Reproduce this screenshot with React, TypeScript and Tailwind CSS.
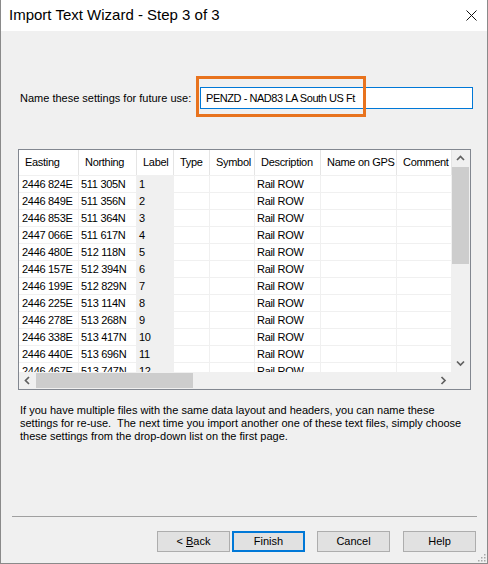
import React from "react";

const ui = { fontFamily: '"Liberation Sans", Arial, sans-serif' };

const columns = [
  { name: "Easting", w: "w-[60px]" },
  { name: "Northing", w: "w-[58px]" },
  { name: "Label", w: "w-[37px]" },
  { name: "Type", w: "w-[36px]" },
  { name: "Symbol", w: "w-[45px]" },
  { name: "Description", w: "w-[66px]" },
  { name: "Name on GPS", w: "w-[76px]" },
  { name: "Comment", w: "w-[55px]" },
];

const rows = [
  ["2446 824E", "511 305N"],
  ["2446 849E", "511 356N"],
  ["2446 853E", "511 364N"],
  ["2447 066E", "511 617N"],
  ["2446 480E", "512 118N"],
  ["2446 157E", "512 394N"],
  ["2446 199E", "512 829N"],
  ["2446 225E", "513 114N"],
  ["2446 278E", "513 268N"],
  ["2446 338E", "513 417N"],
  ["2446 440E", "513 696N"],
  ["2446 467E", "513 747N"],
];

function Chevron({ dir }: { dir: "up" | "down" | "left" | "right" }) {
  const paths = {
    up: "M1 5 L4.5 1.5 L8 5",
    down: "M1 1.5 L4.5 5 L8 1.5",
    left: "M5 1 L1.5 4.5 L5 8",
    right: "M1.5 1 L5 4.5 L1.5 8",
  };
  const box = dir === "up" || dir === "down" ? "0 0 9 6.5" : "0 0 6.5 9";
  const size = dir === "up" || dir === "down" ? { w: 9, h: 6.5 } : { w: 6.5, h: 9 };
  return (
    <svg width={size.w} height={size.h} viewBox={box}>
      <path d={paths[dir]} fill="none" stroke="#606060" strokeWidth="1.7" />
    </svg>
  );
}

function DataGrid() {
  return (
    <div className="ml-[17px] mt-[40px] flex h-[241px] w-[453px] flex-col border border-[#828790] bg-[#f0f0f0] tracking-[-0.3px]">
      <div className="flex h-[222px]">
        <div className="h-full w-[433px] overflow-hidden bg-white">
          <div className="flex h-[25px]">
            {columns.map((c) => (
              <div
                key={c.name}
                className={`${c.w} flex shrink-0 items-center border-r border-[#e5e5e5] pl-[6px] text-[11px] whitespace-nowrap text-black`}
              >
                {c.name}
              </div>
            ))}
          </div>
          {rows.map((r, i) => (
            <div key={i} className="flex h-[17px] border-t border-[#f0f0f0]">
              {columns.map((c, j) => {
                let text = "";
                if (j === 0) text = r[0];
                if (j === 1) text = r[1];
                if (j === 2) text = String(i + 1);
                if (j === 5) text = "Rail ROW";
                return (
                  <div
                    key={c.name}
                    className={`${c.w} flex shrink-0 items-center border-r border-[#f0f0f0] text-[11px] whitespace-nowrap text-black ${
                      j === 0 ? "pl-[3px]" : "pl-[2px]"
                    } ${j === 2 ? "bg-[#f0f0f0]" : ""}`}
                  >
                    {text}
                  </div>
                );
              })}
            </div>
          ))}
        </div>
        <div className="flex h-full w-[17px] flex-col">
          <div className="flex h-[17px] items-center justify-center">
            <Chevron dir="up" />
          </div>
          <div className="flex-1">
            <div className="h-[97px] bg-[#cdcdcd]" />
          </div>
          <div className="flex h-[17px] items-center justify-center">
            <Chevron dir="down" />
          </div>
        </div>
      </div>
      <div className="flex h-[17px]">
        <div className="flex w-[433px] items-center">
          <div className="flex w-[17px] items-center justify-center">
            <Chevron dir="left" />
          </div>
          <div className="h-[15px] w-[157px] bg-[#cdcdcd]" />
          <div className="flex-1" />
          <div className="flex w-[17px] items-center justify-center">
            <Chevron dir="right" />
          </div>
        </div>
        <div className="w-[17px]" />
      </div>
    </div>
  );
}

function Button({ label, focused }: { label: React.ReactNode; focused?: boolean }) {
  return (
    <div
      className={`flex h-[21px] w-[73px] items-center justify-center bg-[#e1e1e1] text-[11px] text-black ${
        focused ? "border-2 border-[#0078d7]" : "border border-[#adadad]"
      }`}
    >
      {label}
    </div>
  );
}

export default function App() {
  return (
    <div
      className="relative flex h-[564px] w-[488px] flex-col border-x border-b border-[#8a8a8a] bg-[#f0f0f0]"
      style={ui}
    >
      <div className="flex h-[31px] shrink-0 items-center justify-between bg-white pl-[8px] pr-[10px]">
        <span className="text-[15px] text-black">Import Text Wizard - Step 3 of 3</span>
        <svg width="11" height="11" viewBox="0 0 11 11">
          <path d="M0.5 0.5 L10.5 10.5 M10.5 0.5 L0.5 10.5" stroke="#111" strokeWidth="1" />
        </svg>
      </div>

      <div className="flex flex-1 flex-col">
        <div className="ml-[19px] mt-[56px] flex h-[22px] items-center">
          <span className="w-[180px] text-[11px] text-black">Name these settings for future use:</span>
          <div className="relative h-[22px] w-[273px]">
            <div className="flex h-full items-center border border-[#0078d7] bg-white pl-[5px] text-[11px] tracking-[-0.45px] text-black">
              PENZD - NAD83 LA South US Ft
            </div>
            <div className="absolute left-[-4px] top-[-11px] h-[41px] w-[170px] border-[3px] border-[#e8731e]" />
          </div>
        </div>

        <DataGrid />

        <div className="ml-[19px] mt-[14px] text-[11px] leading-[13px] text-black">
          <div>If you have multiple files with the same data layout and headers, you can name these</div>
          <div className="whitespace-pre">
            settings for re-use.  The next time you import another one of these text files, simply choose
          </div>
          <div>these settings from the drop-down list on the first page.</div>
        </div>

        <div className="ml-[11px] mt-auto h-px w-[465px] bg-[#a0a0a0]" />

        <div className="mb-[11px] ml-[156px] mt-[14px] flex">
          <Button
            label={
              <span>
                &lt; <span className="underline">B</span>ack
              </span>
            }
          />
          <div className="ml-[2px]">
            <Button label="Finish" focused />
          </div>
          <div className="ml-[12px]">
            <Button label="Cancel" />
          </div>
          <div className="ml-[13px]">
            <Button label="Help" />
          </div>
        </div>
      </div>

      <svg className="absolute bottom-[1px] right-[1px]" width="9" height="9" viewBox="0 0 9 9">
        {[
          [7, 1],
          [7, 4],
          [4, 4],
          [7, 7],
          [4, 7],
          [1, 7],
        ].map(([x, y], i) => (
          <rect key={i} x={x} y={y} width="1.5" height="1.5" fill="#a8a8a8" />
        ))}
      </svg>
    </div>
  );
}
